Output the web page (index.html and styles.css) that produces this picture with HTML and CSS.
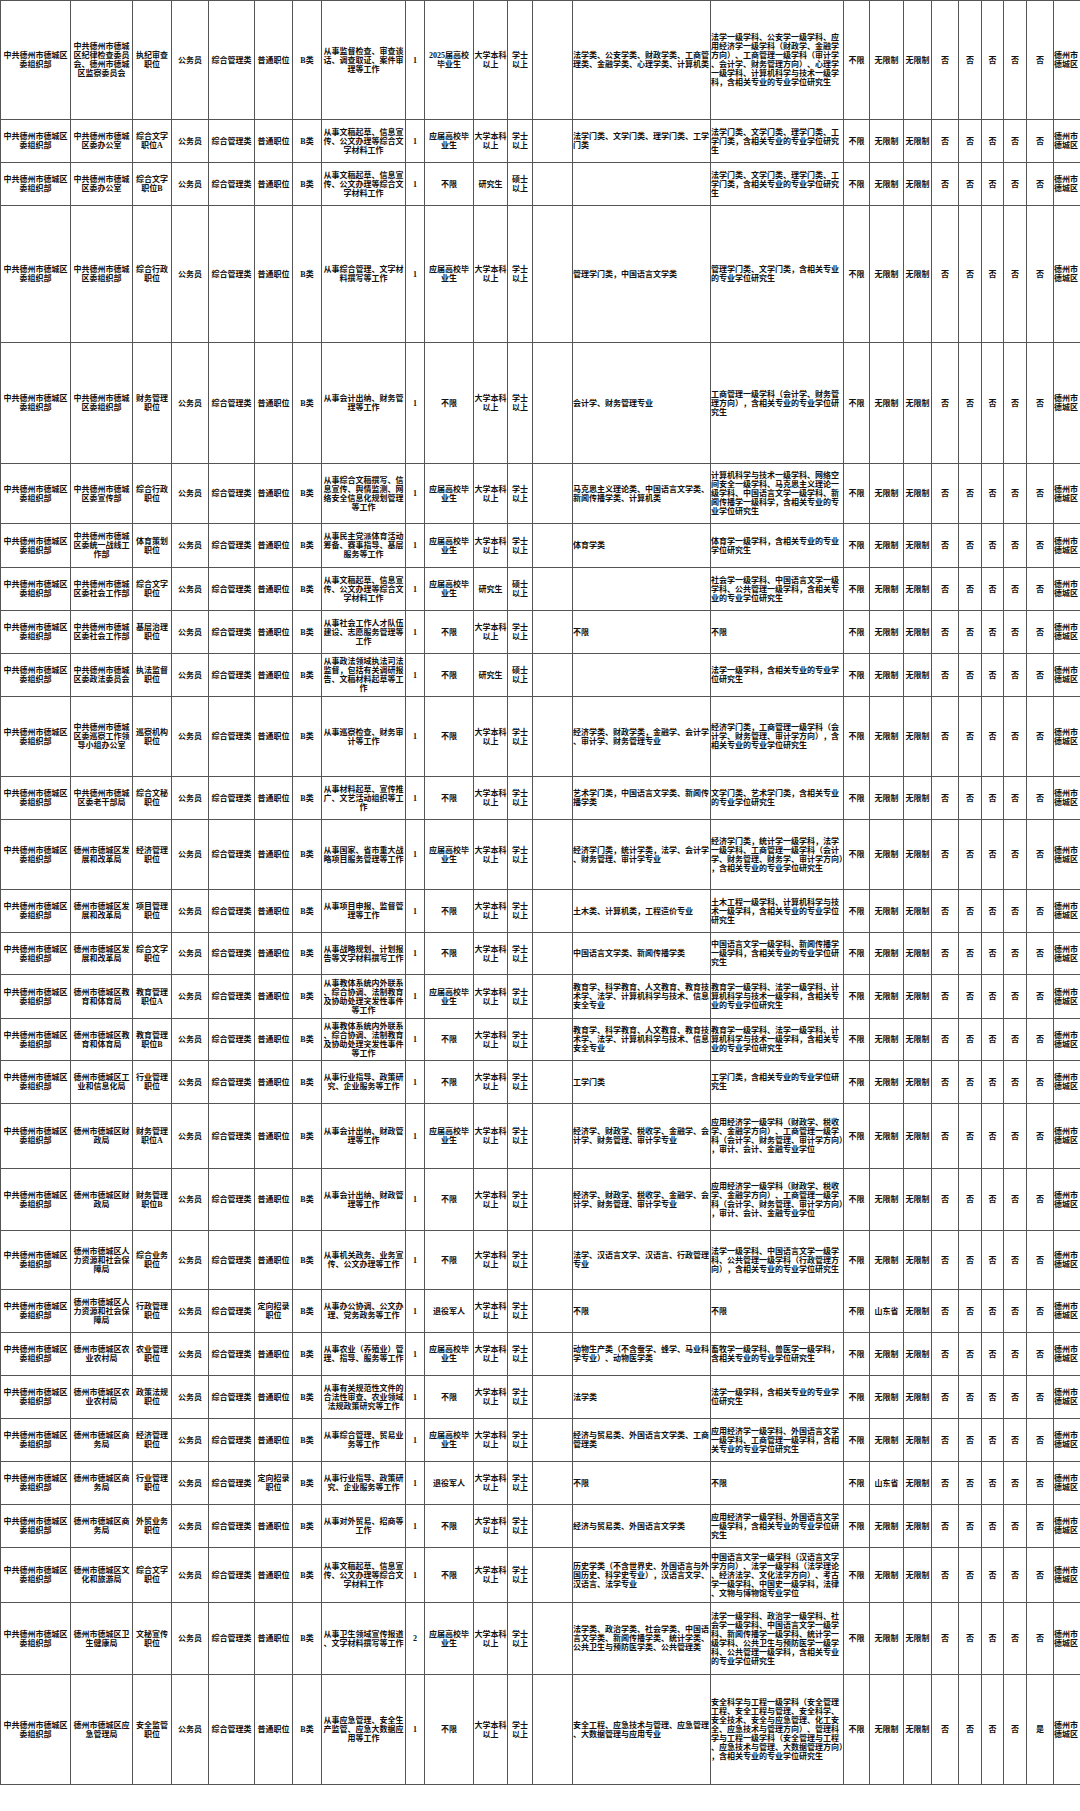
FILE: index.html
```html
<!DOCTYPE html>
<html lang="zh-CN">
<head>
<meta charset="utf-8">
<title>职位表</title>
<link rel="stylesheet" href="styles.css">
</head>
<body>
<table class="sheet">
<colgroup>
<col class="w70"><col class="w62"><col class="w39"><col class="w37"><col class="w46"><col class="w38"><col class="w29"><col class="w84"><col class="w19"><col class="w49"><col class="w34"><col class="w25"><col class="w40"><col class="w138"><col class="w133"><col class="w26"><col class="w34"><col class="w28"><col class="w27"><col class="w23"><col class="w22"><col class="w23"><col class="w27"><col class="w27">
</colgroup>
<tbody>
<tr class="h119"><td>中共德州市德城区委组织部</td><td>中共德州市德城区纪律检查委员会、德州市德城区监察委员会</td><td>执纪审查职位</td><td>公务员</td><td>综合管理类</td><td>普通职位</td><td>B类</td><td>从事监督检查、审查谈话、调查取证、案件审理等工作</td><td>1</td><td>2025届高校毕业生</td><td>大学本科以上</td><td>学士以上</td><td></td><td>法学类、公安学类、财政学类、工商管理类、金融学类、心理学类、计算机类</td><td>法学一级学科、公安学一级学科、应用经济学一级学科（财政学、金融学方向）、工商管理一级学科（审计学、会计学、财务管理方向）、心理学一级学科、计算机科学与技术一级学科，含相关专业的专业学位研究生</td><td>不限</td><td>无限制</td><td>无限制</td><td>否</td><td>否</td><td>否</td><td>否</td><td>否</td><td>德州市德城区</td></tr>
<tr class="h43"><td>中共德州市德城区委组织部</td><td>中共德州市德城区委办公室</td><td>综合文字职位A</td><td>公务员</td><td>综合管理类</td><td>普通职位</td><td>B类</td><td>从事文稿起草、信息宣传、公文办理等综合文字材料工作</td><td>1</td><td>应届高校毕业生</td><td>大学本科以上</td><td>学士以上</td><td></td><td>法学门类、文学门类、理学门类、工学门类</td><td>法学门类、文学门类、理学门类、工学门类，含相关专业的专业学位研究生</td><td>不限</td><td>无限制</td><td>无限制</td><td>否</td><td>否</td><td>否</td><td>否</td><td>否</td><td>德州市德城区</td></tr>
<tr class="h43"><td>中共德州市德城区委组织部</td><td>中共德州市德城区委办公室</td><td>综合文字职位B</td><td>公务员</td><td>综合管理类</td><td>普通职位</td><td>B类</td><td>从事文稿起草、信息宣传、公文办理等综合文字材料工作</td><td>1</td><td>不限</td><td>研究生</td><td>硕士以上</td><td></td><td></td><td>法学门类、文学门类、理学门类、工学门类，含相关专业的专业学位研究生</td><td>不限</td><td>无限制</td><td>无限制</td><td>否</td><td>否</td><td>否</td><td>否</td><td>否</td><td>德州市德城区</td></tr>
<tr class="h137"><td>中共德州市德城区委组织部</td><td>中共德州市德城区委组织部</td><td>综合行政职位</td><td>公务员</td><td>综合管理类</td><td>普通职位</td><td>B类</td><td>从事综合管理、文字材料撰写等工作</td><td>1</td><td>应届高校毕业生</td><td>大学本科以上</td><td>学士以上</td><td></td><td>管理学门类，中国语言文学类</td><td>管理学门类、文学门类，含相关专业的专业学位研究生</td><td>不限</td><td>无限制</td><td>无限制</td><td>否</td><td>否</td><td>否</td><td>否</td><td>否</td><td>德州市德城区</td></tr>
<tr class="h121"><td>中共德州市德城区委组织部</td><td>中共德州市德城区委组织部</td><td>财务管理职位</td><td>公务员</td><td>综合管理类</td><td>普通职位</td><td>B类</td><td>从事会计出纳、财务管理等工作</td><td>1</td><td>不限</td><td>大学本科以上</td><td>学士以上</td><td></td><td>会计学、财务管理专业</td><td>工商管理一级学科（会计学、财务管理方向），含相关专业的专业学位研究生</td><td>不限</td><td>无限制</td><td>无限制</td><td>否</td><td>否</td><td>否</td><td>否</td><td>否</td><td>德州市德城区</td></tr>
<tr class="h60"><td>中共德州市德城区委组织部</td><td>中共德州市德城区委宣传部</td><td>综合行政职位</td><td>公务员</td><td>综合管理类</td><td>普通职位</td><td>B类</td><td>从事综合文稿撰写、信息宣传、舆情监测、网络安全信息化规划管理等工作</td><td>1</td><td>应届高校毕业生</td><td>大学本科以上</td><td>学士以上</td><td></td><td>马克思主义理论类、中国语言文学类、新闻传播学类、计算机类</td><td>计算机科学与技术一级学科、网络空间安全一级学科、马克思主义理论一级学科、中国语言文学一级学科、新闻传播学一级科学，含相关专业的专业学位研究生</td><td>不限</td><td>无限制</td><td>无限制</td><td>否</td><td>否</td><td>否</td><td>否</td><td>否</td><td>德州市德城区</td></tr>
<tr class="h44"><td>中共德州市德城区委组织部</td><td>中共德州市德城区委统一战线工作部</td><td>体育策划职位</td><td>公务员</td><td>综合管理类</td><td>普通职位</td><td>B类</td><td>从事民主党派体育活动筹备、赛事指导、基层服务等工作</td><td>1</td><td>应届高校毕业生</td><td>大学本科以上</td><td>学士以上</td><td></td><td>体育学类</td><td>体育学一级学科，含相关专业的专业学位研究生</td><td>不限</td><td>无限制</td><td>无限制</td><td>否</td><td>否</td><td>否</td><td>否</td><td>否</td><td>德州市德城区</td></tr>
<tr class="h43"><td>中共德州市德城区委组织部</td><td>中共德州市德城区委社会工作部</td><td>综合文字职位</td><td>公务员</td><td>综合管理类</td><td>普通职位</td><td>B类</td><td>从事文稿起草、信息宣传、公文办理等综合文字材料工作</td><td>1</td><td>应届高校毕业生</td><td>研究生</td><td>硕士以上</td><td></td><td></td><td>社会学一级学科、中国语言文学一级学科、公共管理一级学科，含相关专业的专业学位研究生</td><td>不限</td><td>无限制</td><td>无限制</td><td>否</td><td>否</td><td>否</td><td>否</td><td>否</td><td>德州市德城区</td></tr>
<tr class="h43"><td>中共德州市德城区委组织部</td><td>中共德州市德城区委社会工作部</td><td>基层治理职位</td><td>公务员</td><td>综合管理类</td><td>普通职位</td><td>B类</td><td>从事社会工作人才队伍建设、志愿服务管理等工作</td><td>1</td><td>不限</td><td>大学本科以上</td><td>学士以上</td><td></td><td>不限</td><td>不限</td><td>不限</td><td>无限制</td><td>无限制</td><td>否</td><td>否</td><td>否</td><td>否</td><td>否</td><td>德州市德城区</td></tr>
<tr class="h43"><td>中共德州市德城区委组织部</td><td>中共德州市德城区委政法委员会</td><td>执法监督职位</td><td>公务员</td><td>综合管理类</td><td>普通职位</td><td>B类</td><td>从事政法领域执法司法监督，包括有关调研报告、文稿材料起草等工作</td><td>1</td><td>不限</td><td>研究生</td><td>硕士以上</td><td></td><td></td><td>法学一级学科，含相关专业的专业学位研究生</td><td>不限</td><td>无限制</td><td>无限制</td><td>否</td><td>否</td><td>否</td><td>否</td><td>否</td><td>德州市德城区</td></tr>
<tr class="h80"><td>中共德州市德城区委组织部</td><td>中共德州市德城区委巡察工作领导小组办公室</td><td>巡察机构职位</td><td>公务员</td><td>综合管理类</td><td>普通职位</td><td>B类</td><td>从事巡察检查、财务审计等工作</td><td>1</td><td>不限</td><td>大学本科以上</td><td>学士以上</td><td></td><td>经济学类、财政学类，金融学、会计学、审计学、财务管理专业</td><td>经济学门类，工商管理一级学科（会计学、财务管理、审计学方向），含相关专业的专业学位研究生</td><td>不限</td><td>无限制</td><td>无限制</td><td>否</td><td>否</td><td>否</td><td>否</td><td>否</td><td>德州市德城区</td></tr>
<tr class="h43"><td>中共德州市德城区委组织部</td><td>中共德州市德城区委老干部局</td><td>综合文秘职位</td><td>公务员</td><td>综合管理类</td><td>普通职位</td><td>B类</td><td>从事材料起草、宣传推广、文艺活动组织等工作</td><td>1</td><td>不限</td><td>大学本科以上</td><td>学士以上</td><td></td><td>艺术学门类，中国语言文学类、新闻传播学类</td><td>文学门类、艺术学门类，含相关专业的专业学位研究生</td><td>不限</td><td>无限制</td><td>无限制</td><td>否</td><td>否</td><td>否</td><td>否</td><td>否</td><td>德州市德城区</td></tr>
<tr class="h70"><td>中共德州市德城区委组织部</td><td>德州市德城区发展和改革局</td><td>经济管理职位</td><td>公务员</td><td>综合管理类</td><td>普通职位</td><td>B类</td><td>从事国家、省市重大战略项目服务管理等工作</td><td>1</td><td>应届高校毕业生</td><td>大学本科以上</td><td>学士以上</td><td></td><td>经济学门类，统计学类，法学、会计学、财务管理、审计学专业</td><td>经济学门类，统计学一级学科，法学一级学科、工商管理一级学科（会计学、财务管理、财务学、审计学方向），含相关专业的专业学位研究生</td><td>不限</td><td>无限制</td><td>无限制</td><td>否</td><td>否</td><td>否</td><td>否</td><td>否</td><td>德州市德城区</td></tr>
<tr class="h43"><td>中共德州市德城区委组织部</td><td>德州市德城区发展和改革局</td><td>项目管理职位</td><td>公务员</td><td>综合管理类</td><td>普通职位</td><td>B类</td><td>从事项目申报、监督管理等工作</td><td>1</td><td>不限</td><td>大学本科以上</td><td>学士以上</td><td></td><td>土木类、计算机类，工程造价专业</td><td>土木工程一级学科、计算机科学与技术一级学科，含相关专业的专业学位研究生</td><td>不限</td><td>无限制</td><td>无限制</td><td>否</td><td>否</td><td>否</td><td>否</td><td>否</td><td>德州市德城区</td></tr>
<tr class="h42"><td>中共德州市德城区委组织部</td><td>德州市德城区发展和改革局</td><td>综合文字职位</td><td>公务员</td><td>综合管理类</td><td>普通职位</td><td>B类</td><td>从事战略规划、计划报告等文字材料撰写工作</td><td>1</td><td>不限</td><td>大学本科以上</td><td>学士以上</td><td></td><td>中国语言文学类、新闻传播学类</td><td>中国语言文学一级学科、新闻传播学一级学科，含相关专业的专业学位研究生</td><td>不限</td><td>无限制</td><td>无限制</td><td>否</td><td>否</td><td>否</td><td>否</td><td>否</td><td>德州市德城区</td></tr>
<tr class="h44"><td>中共德州市德城区委组织部</td><td>德州市德城区教育和体育局</td><td>教育管理职位A</td><td>公务员</td><td>综合管理类</td><td>普通职位</td><td>B类</td><td>从事教体系统内外联系、综合协调、法制教育及协助处理突发性事件等工作</td><td>1</td><td>应届高校毕业生</td><td>大学本科以上</td><td>学士以上</td><td></td><td>教育学、科学教育、人文教育、教育技术学、法学、计算机科学与技术、信息安全专业</td><td>教育学一级学科、法学一级学科、计算机科学与技术一级学科，含相关专业的专业学位研究生</td><td>不限</td><td>无限制</td><td>无限制</td><td>否</td><td>否</td><td>否</td><td>否</td><td>否</td><td>德州市德城区</td></tr>
<tr class="h42"><td>中共德州市德城区委组织部</td><td>德州市德城区教育和体育局</td><td>教育管理职位B</td><td>公务员</td><td>综合管理类</td><td>普通职位</td><td>B类</td><td>从事教体系统内外联系、综合协调、法制教育及协助处理突发性事件等工作</td><td>1</td><td>不限</td><td>大学本科以上</td><td>学士以上</td><td></td><td>教育学、科学教育、人文教育、教育技术学、法学、计算机科学与技术、信息安全专业</td><td>教育学一级学科、法学一级学科、计算机科学与技术一级学科，含相关专业的专业学位研究生</td><td>不限</td><td>无限制</td><td>无限制</td><td>否</td><td>否</td><td>否</td><td>否</td><td>否</td><td>德州市德城区</td></tr>
<tr class="h43"><td>中共德州市德城区委组织部</td><td>德州市德城区工业和信息化局</td><td>行业管理职位</td><td>公务员</td><td>综合管理类</td><td>普通职位</td><td>B类</td><td>从事行业指导、政策研究、企业服务等工作</td><td>1</td><td>不限</td><td>大学本科以上</td><td>学士以上</td><td></td><td>工学门类</td><td>工学门类，含相关专业的专业学位研究生</td><td>不限</td><td>无限制</td><td>无限制</td><td>否</td><td>否</td><td>否</td><td>否</td><td>否</td><td>德州市德城区</td></tr>
<tr class="h65"><td>中共德州市德城区委组织部</td><td>德州市德城区财政局</td><td>财务管理职位A</td><td>公务员</td><td>综合管理类</td><td>普通职位</td><td>B类</td><td>从事会计出纳、财政管理等工作</td><td>1</td><td>应届高校毕业生</td><td>大学本科以上</td><td>学士以上</td><td></td><td>经济学、财政学、税收学、金融学、会计学、财务管理、审计学专业</td><td>应用经济学一级学科（财政学、税收学、金融学方向）、工商管理一级学科（会计学、财务管理、审计学方向），审计、会计、金融专业学位</td><td>不限</td><td>无限制</td><td>无限制</td><td>否</td><td>否</td><td>否</td><td>否</td><td>否</td><td>德州市德城区</td></tr>
<tr class="h62"><td>中共德州市德城区委组织部</td><td>德州市德城区财政局</td><td>财务管理职位B</td><td>公务员</td><td>综合管理类</td><td>普通职位</td><td>B类</td><td>从事会计出纳、财政管理等工作</td><td>1</td><td>不限</td><td>大学本科以上</td><td>学士以上</td><td></td><td>经济学、财政学、税收学、金融学、会计学、财务管理、审计学专业</td><td>应用经济学一级学科（财政学、税收学、金融学方向）、工商管理一级学科（会计学、财务管理、审计学方向），审计、会计、金融专业学位</td><td>不限</td><td>无限制</td><td>无限制</td><td>否</td><td>否</td><td>否</td><td>否</td><td>否</td><td>德州市德城区</td></tr>
<tr class="h59"><td>中共德州市德城区委组织部</td><td>德州市德城区人力资源和社会保障局</td><td>综合业务职位</td><td>公务员</td><td>综合管理类</td><td>普通职位</td><td>B类</td><td>从事机关政务、业务宣传、公文办理等工作</td><td>1</td><td>不限</td><td>大学本科以上</td><td>学士以上</td><td></td><td>法学、汉语言文学、汉语言、行政管理专业</td><td>法学一级学科、中国语言文学一级学科、公共管理一级学科（行政管理方向），含相关专业的专业学位研究生</td><td>不限</td><td>无限制</td><td>无限制</td><td>否</td><td>否</td><td>否</td><td>否</td><td>否</td><td>德州市德城区</td></tr>
<tr class="h43"><td>中共德州市德城区委组织部</td><td>德州市德城区人力资源和社会保障局</td><td>行政管理职位</td><td>公务员</td><td>综合管理类</td><td>定向招录职位</td><td>B类</td><td>从事办公协调、公文办理、党务政务等工作</td><td>1</td><td>退役军人</td><td>大学本科以上</td><td>学士以上</td><td></td><td>不限</td><td>不限</td><td>不限</td><td>山东省</td><td>无限制</td><td>否</td><td>否</td><td>否</td><td>否</td><td>否</td><td>德州市德城区</td></tr>
<tr class="h43"><td>中共德州市德城区委组织部</td><td>德州市德城区农业农村局</td><td>农业管理职位</td><td>公务员</td><td>综合管理类</td><td>普通职位</td><td>B类</td><td>从事农业（养殖业）管理、指导、服务等工作</td><td>1</td><td>应届高校毕业生</td><td>大学本科以上</td><td>学士以上</td><td></td><td>动物生产类（不含蚕学、蜂学、马业科学专业）、动物医学类</td><td>畜牧学一级学科、兽医学一级学科，含相关专业的专业学位研究生</td><td>不限</td><td>无限制</td><td>无限制</td><td>否</td><td>否</td><td>否</td><td>否</td><td>否</td><td>德州市德城区</td></tr>
<tr class="h43"><td>中共德州市德城区委组织部</td><td>德州市德城区农业农村局</td><td>政策法规职位</td><td>公务员</td><td>综合管理类</td><td>普通职位</td><td>B类</td><td>从事有关规范性文件的合法性审查、农业领域法规政策研究等工作</td><td>1</td><td>不限</td><td>大学本科以上</td><td>学士以上</td><td></td><td>法学类</td><td>法学一级学科，含相关专业的专业学位研究生</td><td>不限</td><td>无限制</td><td>无限制</td><td>否</td><td>否</td><td>否</td><td>否</td><td>否</td><td>德州市德城区</td></tr>
<tr class="h43"><td>中共德州市德城区委组织部</td><td>德州市德城区商务局</td><td>经济管理职位</td><td>公务员</td><td>综合管理类</td><td>普通职位</td><td>B类</td><td>从事综合管理、贸易业务等工作</td><td>1</td><td>应届高校毕业生</td><td>大学本科以上</td><td>学士以上</td><td></td><td>经济与贸易类、外国语言文学类、工商管理类</td><td>应用经济学一级学科、外国语言文学一级学科、工商管理一级学科，含相关专业的专业学位研究生</td><td>不限</td><td>无限制</td><td>无限制</td><td>否</td><td>否</td><td>否</td><td>否</td><td>否</td><td>德州市德城区</td></tr>
<tr class="h43"><td>中共德州市德城区委组织部</td><td>德州市德城区商务局</td><td>行业管理职位</td><td>公务员</td><td>综合管理类</td><td>定向招录职位</td><td>B类</td><td>从事行业指导、政策研究、企业服务等工作</td><td>1</td><td>退役军人</td><td>大学本科以上</td><td>学士以上</td><td></td><td>不限</td><td>不限</td><td>不限</td><td>山东省</td><td>无限制</td><td>否</td><td>否</td><td>否</td><td>否</td><td>否</td><td>德州市德城区</td></tr>
<tr class="h43"><td>中共德州市德城区委组织部</td><td>德州市德城区商务局</td><td>外贸业务职位</td><td>公务员</td><td>综合管理类</td><td>普通职位</td><td>B类</td><td>从事对外贸易、招商等工作</td><td>1</td><td>不限</td><td>大学本科以上</td><td>学士以上</td><td></td><td>经济与贸易类、外国语言文学类</td><td>应用经济学一级学科、外国语言文学一级学科，含相关专业的专业学位研究生</td><td>不限</td><td>无限制</td><td>无限制</td><td>否</td><td>否</td><td>否</td><td>否</td><td>否</td><td>德州市德城区</td></tr>
<tr class="h55"><td>中共德州市德城区委组织部</td><td>德州市德城区文化和旅游局</td><td>综合文字职位</td><td>公务员</td><td>综合管理类</td><td>普通职位</td><td>B类</td><td>从事文稿起草、信息宣传、公文办理等综合文字材料工作</td><td>1</td><td>不限</td><td>大学本科以上</td><td>学士以上</td><td></td><td>历史学类（不含世界史、外国语言与外国历史、科学史专业），汉语言文学、汉语言、法学专业</td><td>中国语言文学一级学科（汉语言文字学方向）、法学一级学科（法学理论、经济法学、文化法学方向）、考古学一级学科、中国史一级学科，法律、文物与博物馆专业学位</td><td>不限</td><td>无限制</td><td>无限制</td><td>否</td><td>否</td><td>否</td><td>否</td><td>否</td><td>德州市德城区</td></tr>
<tr class="h72"><td>中共德州市德城区委组织部</td><td>德州市德城区卫生健康局</td><td>文秘宣传职位</td><td>公务员</td><td>综合管理类</td><td>普通职位</td><td>B类</td><td>从事卫生领域宣传报道、文字材料撰写等工作</td><td>2</td><td>应届高校毕业生</td><td>大学本科以上</td><td>学士以上</td><td></td><td>法学类、政治学类、社会学类、中国语言文学类、新闻传播学类、统计学类、公共卫生与预防医学类、公共管理类</td><td>法学一级学科、政治学一级学科、社会学一级学科、中国语言文学一级学科、新闻传播学一级学科、统计学一级学科、公共卫生与预防医学一级学科、公共管理一级学科，含相关专业的专业学位研究生</td><td>不限</td><td>无限制</td><td>无限制</td><td>否</td><td>否</td><td>否</td><td>否</td><td>否</td><td>德州市德城区</td></tr>
<tr class="h110"><td>中共德州市德城区委组织部</td><td>德州市德城区应急管理局</td><td>安全监管职位</td><td>公务员</td><td>综合管理类</td><td>普通职位</td><td>B类</td><td>从事应急管理、安全生产监管、应急大数据应用等工作</td><td>1</td><td>不限</td><td>大学本科以上</td><td>学士以上</td><td></td><td>安全工程、应急技术与管理、应急管理、大数据管理与应用专业</td><td>安全科学与工程一级学科（安全管理工程、安全工程与管理、安全科学、安全技术、安全与应急管理、化工安全、应急技术与管理方向）、管理科学与工程一级学科（安全管理与工程、应急技术与管理、大数据管理方向），含相关专业的专业学位研究生</td><td>不限</td><td>无限制</td><td>无限制</td><td>否</td><td>否</td><td>否</td><td>否</td><td>是</td><td>德州市德城区</td></tr>
</tbody>
</table>
</body>
</html>
```

FILE: styles.css
```css
html, body {
  margin: 0;
  padding: 0;
  background: #ffffff;
}

.sheet {
  width: 1080px;
  table-layout: fixed;
  border-collapse: collapse;
  font-family: "Liberation Serif", "Noto Sans CJK SC", serif;
  font-size: 8px;
  line-height: 9px;
  font-weight: bold;
  color: #111111;
}

.sheet td {
  border: 1px solid #555555;
  padding: 0;
  text-align: center;
  vertical-align: middle;
  line-break: anywhere;
  word-break: break-all;
  overflow: hidden;
}

.sheet td:nth-child(10),
.sheet td:nth-child(12) {
  padding: 0 1px;
}

.sheet td:nth-child(14),
.sheet td:nth-child(15),
.sheet td:nth-child(24) {
  text-align: left;
}

.w70 { width: 70px; }
.w62 { width: 62px; }
.w39 { width: 39px; }
.w37 { width: 37px; }
.w46 { width: 46px; }
.w38 { width: 38px; }
.w29 { width: 29px; }
.w84 { width: 84px; }
.w19 { width: 19px; }
.w49 { width: 49px; }
.w34 { width: 34px; }
.w25 { width: 25px; }
.w40 { width: 40px; }
.w138 { width: 138px; }
.w133 { width: 133px; }
.w26 { width: 26px; }
.w28 { width: 28px; }
.w27 { width: 27px; }
.w23 { width: 23px; }
.w22 { width: 22px; }

.h119 { height: 119px; }
.h137 { height: 137px; }
.h121 { height: 121px; }
.h110 { height: 110px; }
.h80 { height: 80px; }
.h72 { height: 72px; }
.h70 { height: 70px; }
.h65 { height: 65px; }
.h62 { height: 62px; }
.h60 { height: 60px; }
.h59 { height: 59px; }
.h55 { height: 55px; }
.h44 { height: 44px; }
.h43 { height: 43px; }
.h42 { height: 42px; }
```
